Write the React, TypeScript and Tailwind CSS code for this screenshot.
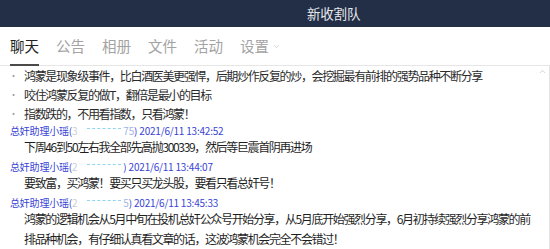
import { ChevronDown, ChevronUp } from "lucide-react";

const tabs = ["聊天", "公告", "相册", "文件", "活动", "设置"];

const bullets = [
  "鸿蒙是现象级事件，比白酒医美更强悍，后期炒作反复的炒，会挖掘最有前排的强势品种不断分享",
  "咬住鸿蒙反复的做T，翻倍是最小的目标",
  "指数跌的，不用看指数，只看鸿蒙！",
];

const messages = [
  {
    head: "3",
    tail: "75",
    time: "2021/6/11 13:42:52",
    lines: ["下周46到50左右我全部先高抛300339，然后等巨震首阴再进场"],
  },
  {
    head: "2",
    tail: "",
    time: "2021/6/11 13:44:07",
    lines: ["要致富，买鸿蒙！要买只买龙头股，要看只看总奸号！"],
  },
  {
    head: "2",
    tail: "5",
    time: "2021/6/11 13:45:33",
    lines: [
      "鸿蒙的逻辑机会从5月中旬在投机总奸公众号开始分享，从5月底开始强烈分享，6月初持续强烈分享鸿蒙的前",
      "排品种机会，有仔细认真看文章的话，这波鸿蒙机会完全不会错过！",
    ],
  },
];

export default function App() {
  return (
    <div className="flex h-[249px] w-[550px] flex-col overflow-hidden bg-white font-['Noto_Sans_CJK_SC',sans-serif]">
      <div className="flex h-[27px] shrink-0 items-center bg-[#232f47] pl-[307px]">
        <span className="text-[13.5px] tracking-[-0.2px] text-[#e6e8ec]">新收割队</span>
      </div>

      <div className="flex h-[39px] shrink-0 items-end gap-[17px] border-b border-[#e6e6e6] pl-[10px]">
        {tabs.map((t, i) => (
          <div
            key={t}
            className={
              i === 0
                ? "flex h-full items-center border-b-2 border-[#4a4a4a] text-[14.5px] text-[#222] -mb-px"
                : "flex h-full items-center text-[14.5px] text-[#a3a3a3]"
            }
          >
            {t}
            {i === 5 && <ChevronDown className="ml-[3px] h-[9px] w-[9px] text-[#b5b5b5]" strokeWidth={1.5} />}
          </div>
        ))}
      </div>

      <div className="flex min-h-0 flex-1">
        <div className="min-w-0 flex-1 text-[12px] tracking-[-1.35px] text-[#1f1f1f]">
          <ul>
            {bullets.map((b) => (
              <li key={b} className="flex h-[19px] items-center whitespace-nowrap">
                <span className="w-[24px] pl-[9px] text-[9px] text-[#9a9a9a]">•</span>
                <span className="text-[#2a2a2a]">{b}</span>
              </li>
            ))}
          </ul>
          {messages.map((m, i) => (
            <div key={m.time} className={i === 0 ? "" : "mt-[2px]"}>
              <div className="flex h-[14px] items-center whitespace-nowrap pl-[10px] text-[10px] tracking-[-0.2px] text-[#3844d6]">
                <span>总奸助理小瑶(</span>
                <span className="text-[#c9cdd6]">{m.head}</span>
                <span className="ml-[10px] mr-[2px] h-[6px] w-[34px] self-start border-b border-dashed border-[#8fd3f0]" />
                <span className="text-[#9fb6e6]">{m.tail}</span>
                <span>) {m.time}</span>
              </div>
              {m.lines.map((l) => (
                <div key={l} className="h-[20px] whitespace-nowrap pl-[24px] leading-[20px]">
                  {l}
                </div>
              ))}
            </div>
          ))}
        </div>
        <div className="flex w-[15px] shrink-0 flex-col items-center border-r border-[#e3e3e3] pt-[1px]">
          <ChevronUp className="h-[9px] w-[9px] text-[#b0b0b0]" strokeWidth={1.5} />
        </div>
      </div>
    </div>
  );
}
